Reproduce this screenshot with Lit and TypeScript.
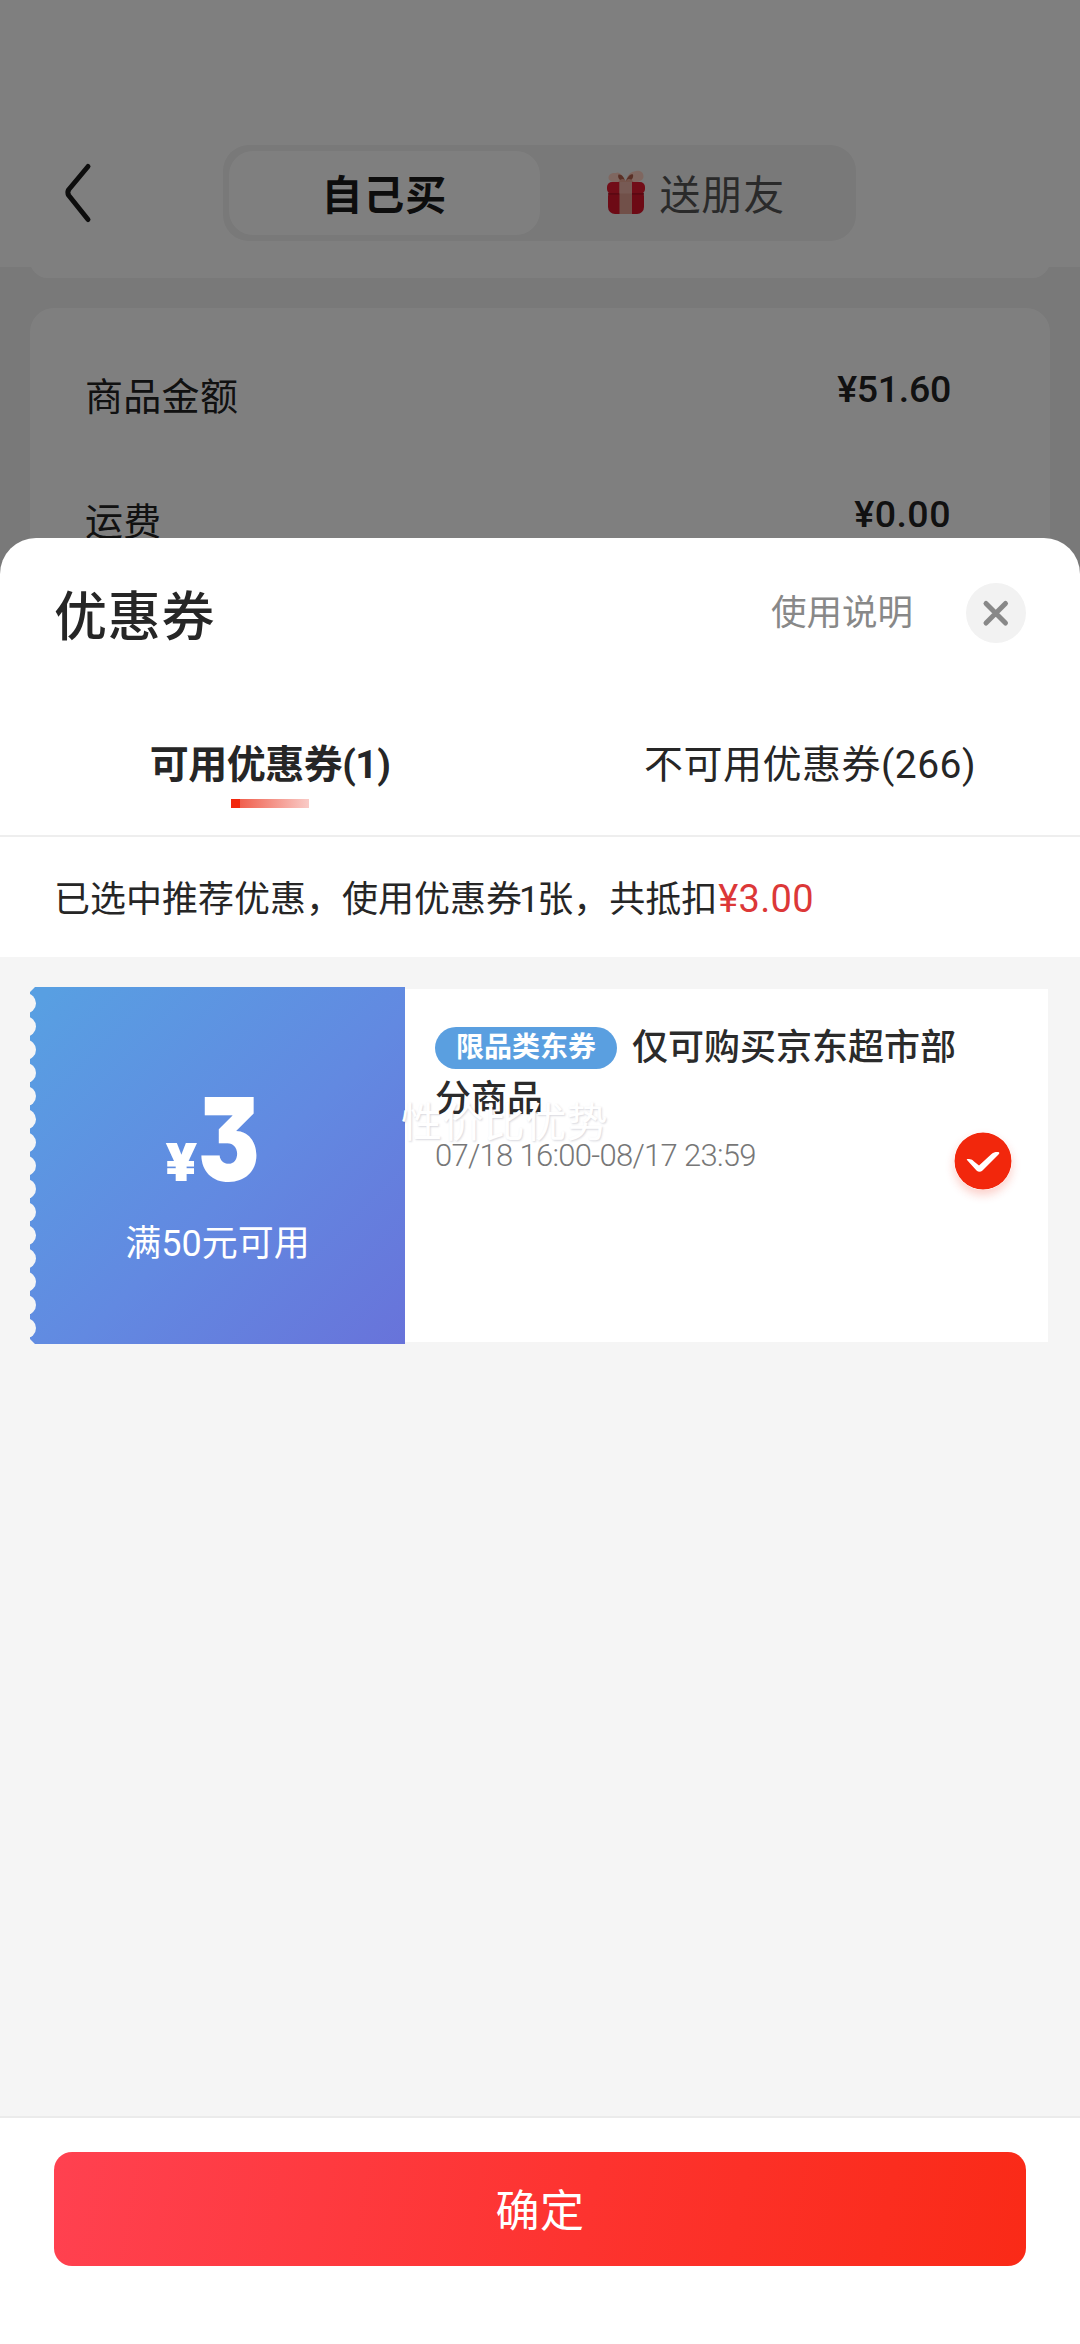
import { LitElement, html, css, svg } from "lit";
import { customElement, state } from "lit/decorators.js";

const SCALLOPS = Array.from({ length: 15 }, (_, i) => 16.3 + i * 23.2);

const backIcon = html`<svg class="back" width="30" height="64" viewBox="0 0 30 64" fill="none">
  <path d="M26 5.500L6.800 28.500Q4.800 31.500 6.800 34.500L26 58.500" stroke="#1a1a1a" stroke-width="5" stroke-linecap="round" stroke-linejoin="round" />
</svg>`;

const giftIcon = html`<svg class="gift" width="40" height="46" viewBox="0 0 40 46">
  <path d="M19 13C11 14.500 2.500 13 2.500 9C2.500 5 6 3.500 10 4C13 1.500 18 8 19 12Z" fill="#ffcfc0" />
  <path d="M20 13C28 14.500 37.500 13 37.500 7.500C37.500 2 32 1 28 2.500C23 3 21 8 20 12Z" fill="#ffcfc0" />
  <path d="M18.500 12.500C14 12 11 9 12.500 5.500C16 5 18.500 9 19 12ZM21 12.500C25 12.500 28 9 27 5.500C24 4 21 9 20 12Z" fill="#b5604c" />
  <path d="M12 13.500C15 9 18 9.500 20 12C22 9 25 9.500 28 13.500Z" fill="#eba896" />
  <rect x="2" y="20" width="36" height="25" rx="7" fill="#da142a" />
  <rect x="1" y="13" width="38" height="12" rx="5" fill="#e41a30" />
  <path d="M2 24.800H38" stroke="#a80f20" stroke-width="1.200" />
  <rect x="13.500" y="13" width="12.500" height="32" fill="#e3a093" />
  <rect x="13.500" y="13" width="12.500" height="11.500" fill="#efb5a8" />
</svg>`;

const closeIcon = html`<svg width="60" height="60" viewBox="0 0 60 60" fill="none">
  <circle cx="30" cy="30" r="30" fill="#f2f2f2" />
  <path d="M20 20.500L39.500 40M20 40L39.500 20.500" stroke="#888" stroke-width="5" stroke-linecap="round" />
</svg>`;

const checkIcon = html`<svg class="check" width="58" height="58" viewBox="0 0 58 58" fill="none">
  <circle cx="29" cy="29" r="28.500" fill="#f2270c" />
  <path d="M13 28C12 27 14 27 16 27.200C18 27.400 19 28.500 20 29.500L25 33.500L37 22.500C39 20.500 41 20 43.500 20C46 20 45.500 21.500 44.500 22.500L28.500 38.500Q25.500 41 22.500 38.500Z" fill="#fff" />
</svg>`;

@customElement("coupon-card")
class CouponCard extends LitElement {
  static styles = css`
    :host {
      display: flex;
      position: relative;
      height: 357px;
      align-items: center;
      color: #2b2b2b;
    }
    .left {
      position: relative;
      width: 375px;
      height: 357px;
      box-sizing: border-box;
      padding-top: 98px;
      color: #fff;
      background: linear-gradient(135deg, #589fe2 3%, #6289e1 55%, #6873da 100%);
      display: flex;
      flex-direction: column;
      align-items: center;
    }
    .edge {
      position: absolute;
      left: 0;
      top: 0;
    }
    .amount {
      display: flex;
      align-items: flex-end;
      height: 110px;
      font-family: Inter, "Noto Sans CJK SC", sans-serif;
      font-weight: 900;
      font-feature-settings: "cv09";
      padding-right: 15px;
    }
    .yen {
      font-size: 52px;
      line-height: 52px;
      height: 58px;
      width: 33px;
      transform: scaleX(1.07);
      transform-origin: 0 50%;
    }
    .num {
      font-size: 115px;
      line-height: 110px;
      transform: scaleX(0.8);
      transform-origin: 0 50%;
      width: 58px;
    }
    .cond {
      font-size: 36px;
      line-height: 48px;
      margin-top: 25px;
    }
    .body {
      flex: 1;
      height: 353px;
      box-sizing: border-box;
      background: #fff;
      display: flex;
      margin-right: 2px;
      padding: 34px 36px 0 30px;
    }
    .info {
      width: 525px;
    }
    .name {
      font-size: 36px;
      line-height: 51px;
      font-weight: 500;
    }
    .tag {
      display: inline-block;
      width: 182px;
      height: 42px;
      line-height: 42px;
      border-radius: 21px;
      background: #5a9fe0;
      color: #fff;
      text-align: center;
      font-size: 28px;
      font-weight: 700;
      margin: -5px 15px 0 0;
      vertical-align: middle;
    }
    .date {
      font-size: 31px;
      line-height: 36px;
      font-weight: 300;
      color: #777;
      margin-top: 13px;
      letter-spacing: -0.7px;
      white-space: nowrap;
    }
    .check {
      margin-top: 109px;
      margin-left: -6px;
      flex: none;
      border-radius: 50%;
      box-shadow: 0 5px 10px rgba(242, 39, 12, 0.22);
    }
    .mark {
      position: absolute;
      left: 371px;
      top: 109px;
      font-size: 41px;
      line-height: 54px;
      letter-spacing: 0.4px;
      color: #fff;
      text-shadow: 1px 1px 2px rgba(60, 60, 90, 0.2);
      white-space: nowrap;
    }
  `;

  render() {
    return html`
      <div class="left">
        <svg class="edge" width="8" height="357" viewBox="0 0 8 357">
          ${SCALLOPS.map((y) => svg`<circle cx="-4" cy=${y} r="10" fill="#f5f5f5" />`)}
          <path d="M0 0H5L0 5ZM0 357H5L0 352Z" fill="#f5f5f5" />
        </svg>
        <div class="amount"><span class="yen">¥</span><span class="num">3</span></div>
        <div class="cond">满50元可用</div>
      </div>
      <div class="body">
        <div class="info">
          <div class="name"><span class="tag">限品类东券</span>仅可购买京东超市部分商品</div>
          <div class="date">07/18 16:00-08/17 23:59</div>
        </div>
        ${checkIcon}
      </div>
      <div class="mark">性价比优势</div>
    `;
  }
}

@customElement("app-root")
class AppRoot extends LitElement {
  @state() private rows = [
    { label: "商品金额", value: "¥51.60" },
    { label: "运费", value: "¥0.00" },
  ];

  static styles = css`
    :host {
      display: block;
      position: relative;
      width: 1080px;
      height: 2344px;
      overflow: hidden;
      background: #f2f2f2;
      color: #262626;
      font-family: Roboto, "Noto Sans CJK SC", sans-serif;
    }
    .top {
      height: 267px;
      box-sizing: border-box;
      background: #fff;
      display: flex;
      align-items: flex-start;
      padding: 145px 0 0 62px;
    }
    .back {
      margin-top: 16px;
    }
    .segment {
      display: flex;
      box-sizing: border-box;
      width: 633px;
      height: 96px;
      margin-left: 131px;
      padding: 6px;
      border-radius: 26px;
      background: #f2f2f2;
    }
    .seg {
      flex: 1;
      display: flex;
      align-items: center;
      justify-content: center;
      font-size: 41px;
      line-height: 84px;
      border-radius: 24px;
      letter-spacing: 0.8px;
      color: #555;
    }
    .seg span {
      padding-top: 6px;
      line-height: 78px;
    }
    .seg.on {
      background: #fff;
      color: #1a1a1a;
      font-weight: 700;
    }
    .gift {
      margin: -2px 14px 0 1px;
    }
    .card {
      margin: 0 30px;
      background: #fff;
      border-radius: 24px;
    }
    .prev {
      height: 35px;
      margin-top: -24px;
      margin-bottom: 30px;
    }
    .fees {
      height: 400px;
      box-sizing: border-box;
      padding: 27px 99px 0 55px;
    }
    .fee {
      display: flex;
      justify-content: space-between;
      height: 125px;
      line-height: 125px;
      font-size: 38px;
      letter-spacing: 0.3px;
      color: #222;
    }
    .fee b {
      font-size: 37.5px;
      font-weight: 500;
      line-height: 108px;
      letter-spacing: -0.3px;
    }
    .fee + .fee b {
      letter-spacing: 0.5px;
    }
    .mask {
      position: absolute;
      inset: 0;
      background: rgba(0, 0, 0, 0.5);
      display: flex;
      flex-direction: column;
      justify-content: flex-end;
    }
    .sheet {
      height: 1806px;
      background: #fff;
      border-radius: 36px 36px 0 0;
      display: flex;
      flex-direction: column;
      overflow: hidden;
    }
    .head {
      display: flex;
      align-items: center;
      height: 150px;
      padding: 0 54px;
    }
    .title {
      flex: 1;
      font-size: 53px;
      line-height: 80px;
      padding-top: 9px;
      font-weight: 500;
      letter-spacing: 0.8px;
    }
    .help {
      font-size: 35.5px;
      line-height: 50px;
      color: #888;
      margin-right: 53px;
    }
    .head svg {
      display: block;
    }
    .tabs {
      display: flex;
      height: 147px;
      border-bottom: 2px solid #eee;
    }
    .tab {
      flex: 1;
      display: flex;
      flex-direction: column;
      align-items: center;
      font-size: 39px;
      line-height: 56px;
      padding-top: 49px;
      letter-spacing: 0.5px;
    }
    .tab.on {
      font-weight: 700;
      letter-spacing: -0.5px;
    }
    .bar {
      width: 78px;
      height: 9px;
      margin-top: 6px;
      background: linear-gradient(90deg, #f2270c 9px, #f0604e 9px, #f9cbc7 100%);
    }
    .tip {
      height: 120px;
      line-height: 125px;
      padding-left: 54px;
      font-size: 36px;
      white-space: nowrap;
    }
    .tip i {
      font-style: normal;
      margin: 0 -2px 0 -3px;
    }
    .tip em {
      font-style: normal;
      font-size: 38px;
      letter-spacing: 0.3px;
      color: #dc3838;
      margin-left: 1px;
    }
    .list {
      flex: 1;
      background: #f5f5f5;
      padding: 30px 30px 0;
    }
    .foot {
      height: 192px;
      border-top: 2px solid #ebebeb;
      padding: 34px 54px 0;
    }
    .ok {
      height: 114px;
      line-height: 120px;
      border-radius: 18px;
      text-align: center;
      font-size: 44px;
      letter-spacing: 0.5px;
      color: #fff;
      background: linear-gradient(100deg, #ff4150 0%, #fd332f 55%, #fa2a17 100%);
    }
  `;

  render() {
    return html`
      <div class="top">
        ${backIcon}
        <div class="segment">
          <div class="seg on"><span>自己买</span></div>
          <div class="seg">${giftIcon}<span>送朋友</span></div>
        </div>
      </div>
      <div class="card prev"></div>
      <div class="card fees">
        ${this.rows.map((r) => html`<div class="fee"><span>${r.label}</span><b>${r.value}</b></div>`)}
      </div>
      <div class="mask">
        <div class="sheet">
          <div class="head">
            <div class="title">优惠券</div>
            <div class="help">使用说明</div>
            ${closeIcon}
          </div>
          <div class="tabs">
            <div class="tab on">可用优惠券(1)<div class="bar"></div></div>
            <div class="tab">不可用优惠券(266)</div>
          </div>
          <div class="tip">已选中推荐优惠，使用优惠券<i>1</i>张，共抵扣<em>¥3.00</em></div>
          <div class="list"><coupon-card></coupon-card></div>
          <div class="foot"><div class="ok">确定</div></div>
        </div>
      </div>
    `;
  }
}
